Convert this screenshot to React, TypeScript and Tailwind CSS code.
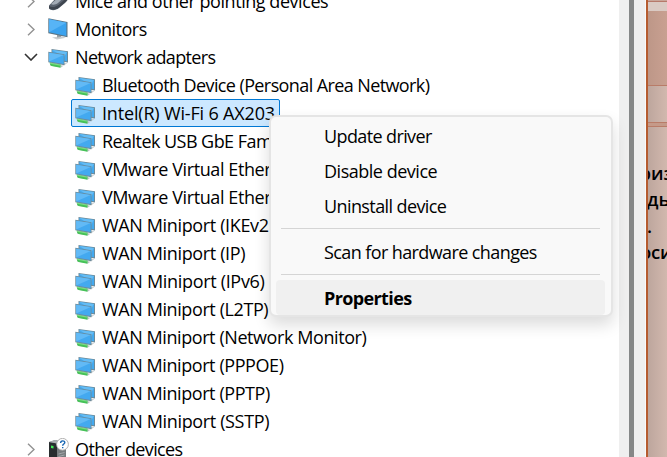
import clsx from "clsx";

type IconName = "mouse" | "monitor" | "network" | "other";

type TreeRow = {
  label: string;
  icon: IconName;
  tracking: string;
  state?: "open" | "closed";
  selected?: boolean;
};

const rows: TreeRow[] = [
  { label: "Mice and other pointing devices", icon: "mouse", state: "closed", tracking: "tracking-[-0.45px]" },
  { label: "Monitors", icon: "monitor", state: "closed", tracking: "tracking-[-0.5px]" },
  { label: "Network adapters", icon: "network", state: "open", tracking: "tracking-[-0.65px]" },
  { label: "Bluetooth Device (Personal Area Network)", icon: "network", tracking: "tracking-[-0.6px]" },
  { label: "Intel(R) Wi-Fi 6 AX203", icon: "network", selected: true, tracking: "tracking-[-0.17px]" },
  { label: "Realtek USB GbE Family Controller", icon: "network", tracking: "tracking-[-0.55px]" },
  { label: "VMware Virtual Ethernet Adapter for VMnet1", icon: "network", tracking: "tracking-[-0.4px]" },
  { label: "VMware Virtual Ethernet Adapter for VMnet8", icon: "network", tracking: "tracking-[-0.4px]" },
  { label: "WAN Miniport (IKEv2)", icon: "network", tracking: "tracking-[-0.36px]" },
  { label: "WAN Miniport (IP)", icon: "network", tracking: "tracking-[-0.36px]" },
  { label: "WAN Miniport (IPv6)", icon: "network", tracking: "tracking-[-0.32px]" },
  { label: "WAN Miniport (L2TP)", icon: "network", tracking: "tracking-[-0.4px]" },
  { label: "WAN Miniport (Network Monitor)", icon: "network", tracking: "tracking-[-0.42px]" },
  { label: "WAN Miniport (PPPOE)", icon: "network", tracking: "tracking-[-0.42px]" },
  { label: "WAN Miniport (PPTP)", icon: "network", tracking: "tracking-[-0.42px]" },
  { label: "WAN Miniport (SSTP)", icon: "network", tracking: "tracking-[-0.36px]" },
  { label: "Other devices", icon: "other", state: "closed", tracking: "tracking-[-0.62px]" },
];

function Chevron({ open }: { open: boolean }) {
  return open ? (
    <svg width="14" height="8" viewBox="0 0 14 8" fill="none" stroke="#333" strokeWidth="1.6">
      <path d="M1 1l6 6 6-6" />
    </svg>
  ) : (
    <svg width="8" height="13" viewBox="0 0 8 13" fill="none" stroke="#929292" strokeWidth="1.4">
      <path d="M1 .8l6 5.7-6 5.7" />
    </svg>
  );
}

function DeviceIcon({ name }: { name: IconName }) {
  if (name === "mouse") {
    return (
      <svg width="22" height="22" viewBox="0 0 22 22">
        <path d="M1 15.5L10 6c3-3 8-3 10-.5 1.600 2-.2 5-3 7.500l-6 5c-3 2.500-8 3-10 .5z" fill="#5c6470" />
        <path d="M3 14l8-7c3-2.500 6-2 7-.5-3 1-5 4-8 6.500-2 1.500-5 2.500-7 1z" fill="#a3abb5" />
        <path d="M1 16c3 2 7 1 10-1.500l9-8c.5 2-1 4-3 6l-6 5c-3 2.500-8 3-10 .5z" fill="#3e454f" />
      </svg>
    );
  }
  if (name === "monitor") {
    return (
      <svg width="22" height="22" viewBox="0 0 22 22">
        <path d="M4 19.500l9-1.300 5 1.600-9 1.700z" fill="#c9cdcf" />
        <path d="M9 16l4 .8v2.200l-4 .4z" fill="#9aa2a6" />
        <path d="M.3.300L19.500 4v15.200L.3 15.200z" fill="#5b7585" />
        <path d="M1.100 1.300l17.300 3.400v13.200L1.100 14.300z" fill="#3aa2ee" />
        <path d="M1.100 1.300l17.300 3.400L1.100 14.300z" fill="#57b4f6" />
      </svg>
    );
  }
  if (name === "network") {
    return (
      <svg width="22" height="22" viewBox="0 0 22 22">
        <path d="M14 17l5.500.300-4 2.200z" fill="#c4cacc" />
        <path d="M3.500 3L20 5.300v11.200L3.500 14z" fill="#6c8b9b" />
        <path d="M4.300 4l14.700 2.100v9.200L4.300 13z" fill="#43a9ef" />
        <path d="M4.300 4l14.700 2.100-3 5z" fill="#65bdf5" />
        <path d="M2 17l10 2 3.500.800-2.500 1.700L2 19.600z" fill="#bfc5c6" />
        <path d="M1.800 16.500l10.700 2v3.200l-9-1.700c-1-.300-1.700-2-1.700-3.500z" fill="#45c257" />
        <path d="M1.800 16.300l10.700 2v1.400L1.800 17.700z" fill="#7bdc84" />
        <path d="M.3 5.700l16.200 2.600v10.900L.3 16.300z" fill="#6c8b9b" />
        <path d="M1.100 6.700l14.600 2.400v8.900L1.100 15.400z" fill="#43a9f0" />
        <path d="M1.100 6.700l14.600 2.400L1.100 15.400z" fill="#62baf6" />
      </svg>
    );
  }
  return (
    <svg width="22" height="22" viewBox="0 0 22 22">
      <path d="M1 4l6-2 11 2v15l-7 3L1 19z" fill="#73787b" />
      <path d="M1 4l8 1.500V21l-8-2z" fill="#292d2f" />
      <path d="M9 5.500l9-1.500v15l-9 2.500z" fill="#777c7e" />
      <path d="M1 4l6-2 11 2-9 1.500z" fill="#aaafb1" />
      <path d="M3 7.500l2.500.5v2.500L3 10z" fill="#42ed58" />
      <path d="M10.500 16l6-1.500M10.500 18.500l6-1.500" stroke="#b4b9bb" strokeWidth=".7" />
      <circle cx="14.500" cy="6.300" r="5.900" fill="#fff" stroke="#aaa" strokeWidth=".9" />
      <path d="M12.600 5c0-2.900 4.200-2.700 4.200-.5 0 1.500-2.100 1.600-2.100 3.200M14.700 8.900v1.400" fill="none" stroke="#1766b3" strokeWidth="1.400" />
    </svg>
  );
}

function DeviceTree() {
  return (
    <div className="-mt-[13px] flex flex-col">
      {rows.map((row) => (
        <div key={row.label} className="flex h-7 shrink-0 items-center">
          <div className={clsx("flex shrink-0 items-center", row.state ? "w-[45px] pl-6" : "w-[71px]")}>
            {row.state && (
              <div className="flex w-[14px] justify-center">
                <Chevron open={row.state === "open"} />
              </div>
            )}
          </div>
          <div
            className={clsx(
              "flex h-7 items-center border pl-[3px] whitespace-nowrap",
              row.selected ? "w-[209px] rounded-[2px] border-[#0078d4] bg-[#cce8ff]" : "border-transparent",
            )}
          >
            <div className={clsx("w-[27px] shrink-0", row.state && "-ml-px")}>
              <DeviceIcon name={row.icon} />
            </div>
            <span className={row.tracking}>{row.label}</span>
          </div>
        </div>
      ))}
    </div>
  );
}

function MenuItem({ label, tracking, active }: { label: string; tracking: string; active?: boolean }) {
  return (
    <div
      className={clsx(
        "mr-[6px] ml-[5px] flex h-[35px] items-center rounded-[4px] pl-[48px] whitespace-nowrap",
        active && "bg-[#f0f0f0] font-bold",
      )}
    >
      <span className={tracking}>{label}</span>
    </div>
  );
}

function Separator() {
  return <div className="mr-[11px] ml-[10px] h-px bg-[#d5d5d5]" />;
}

function ContextMenu() {
  return (
    <div className="absolute top-[115px] left-[269px] h-[202px] w-[344px] rounded-[7px] border-2 border-[#e5e5e5] bg-[#f9f9f9] pt-px shadow-[0_8px_16px_rgba(0,0,0,0.14)]">
      <MenuItem label="Update driver" tracking="tracking-[-0.62px]" />
      <MenuItem label="Disable device" tracking="tracking-[-0.48px]" />
      <MenuItem label="Uninstall device" tracking="tracking-[-0.6px]" />
      <div className="pt-[5px] pb-[5px]">
        <Separator />
      </div>
      <MenuItem label="Scan for hardware changes" tracking="tracking-[-0.6px]" />
      <div className="pt-[5px] pb-[5px]">
        <Separator />
      </div>
      <MenuItem label="Properties" tracking="tracking-[-0.62px]" active />
    </div>
  );
}

// Sliver of the window that sits behind Device Manager
function BackgroundWindow() {
  return (
    <div className="flex w-[19px] shrink-0 flex-col overflow-hidden bg-linear-to-r from-[#bda69d] to-[#d2b8ae]">
      <div className="h-px shrink-0 bg-[#c9a598]" />
      <div className="h-px shrink-0 bg-[#b6796a]" />
      <div className="h-[9px] shrink-0 bg-[#dacac3]" />
      <div className="h-[74px] shrink-0 bg-linear-to-r from-[#bd9788] to-[#c9a091]" />
      <div className="h-px shrink-0 bg-[#b97c68]" />
      <div className="h-[36px] shrink-0" />
      <div className="h-px shrink-0 bg-[#b97c68]" />
      <div className="h-[3px] shrink-0 bg-[#c59a89]" />
      <div className="h-px shrink-0 bg-[#b97c68]" />
      <div className="flex flex-col pt-[33px] font-['Open_Sans','Noto_Sans',sans-serif] text-[18.5px] leading-[26.4px] font-semibold whitespace-nowrap text-black">
        <span className="-ml-[8.5px]">риз</span>
        <span className="-ml-[1px]">дь</span>
        <span className="-ml-[1px]">.</span>
        <span className="-ml-[8px] tracking-[-0.3px]">оси</span>
      </div>
    </div>
  );
}

export default function App() {
  return (
    <div className="relative flex h-[457px] w-[667px] overflow-hidden bg-white font-['Open_Sans','Noto_Sans',sans-serif] text-[18px] leading-7 text-black">
      <div className="w-[619px] shrink-0 overflow-hidden bg-white">
        <DeviceTree />
      </div>
      <div className="flex w-[26px] shrink-0 bg-[#efefef] pl-[10px]">
        <div className="w-[5px] bg-[#858787]" />
      </div>
      <div className="w-px shrink-0 bg-[#f9f9f9]" />
      <div className="w-[2px] shrink-0 bg-[#b65c30]" />
      <BackgroundWindow />
      <ContextMenu />
    </div>
  );
}
